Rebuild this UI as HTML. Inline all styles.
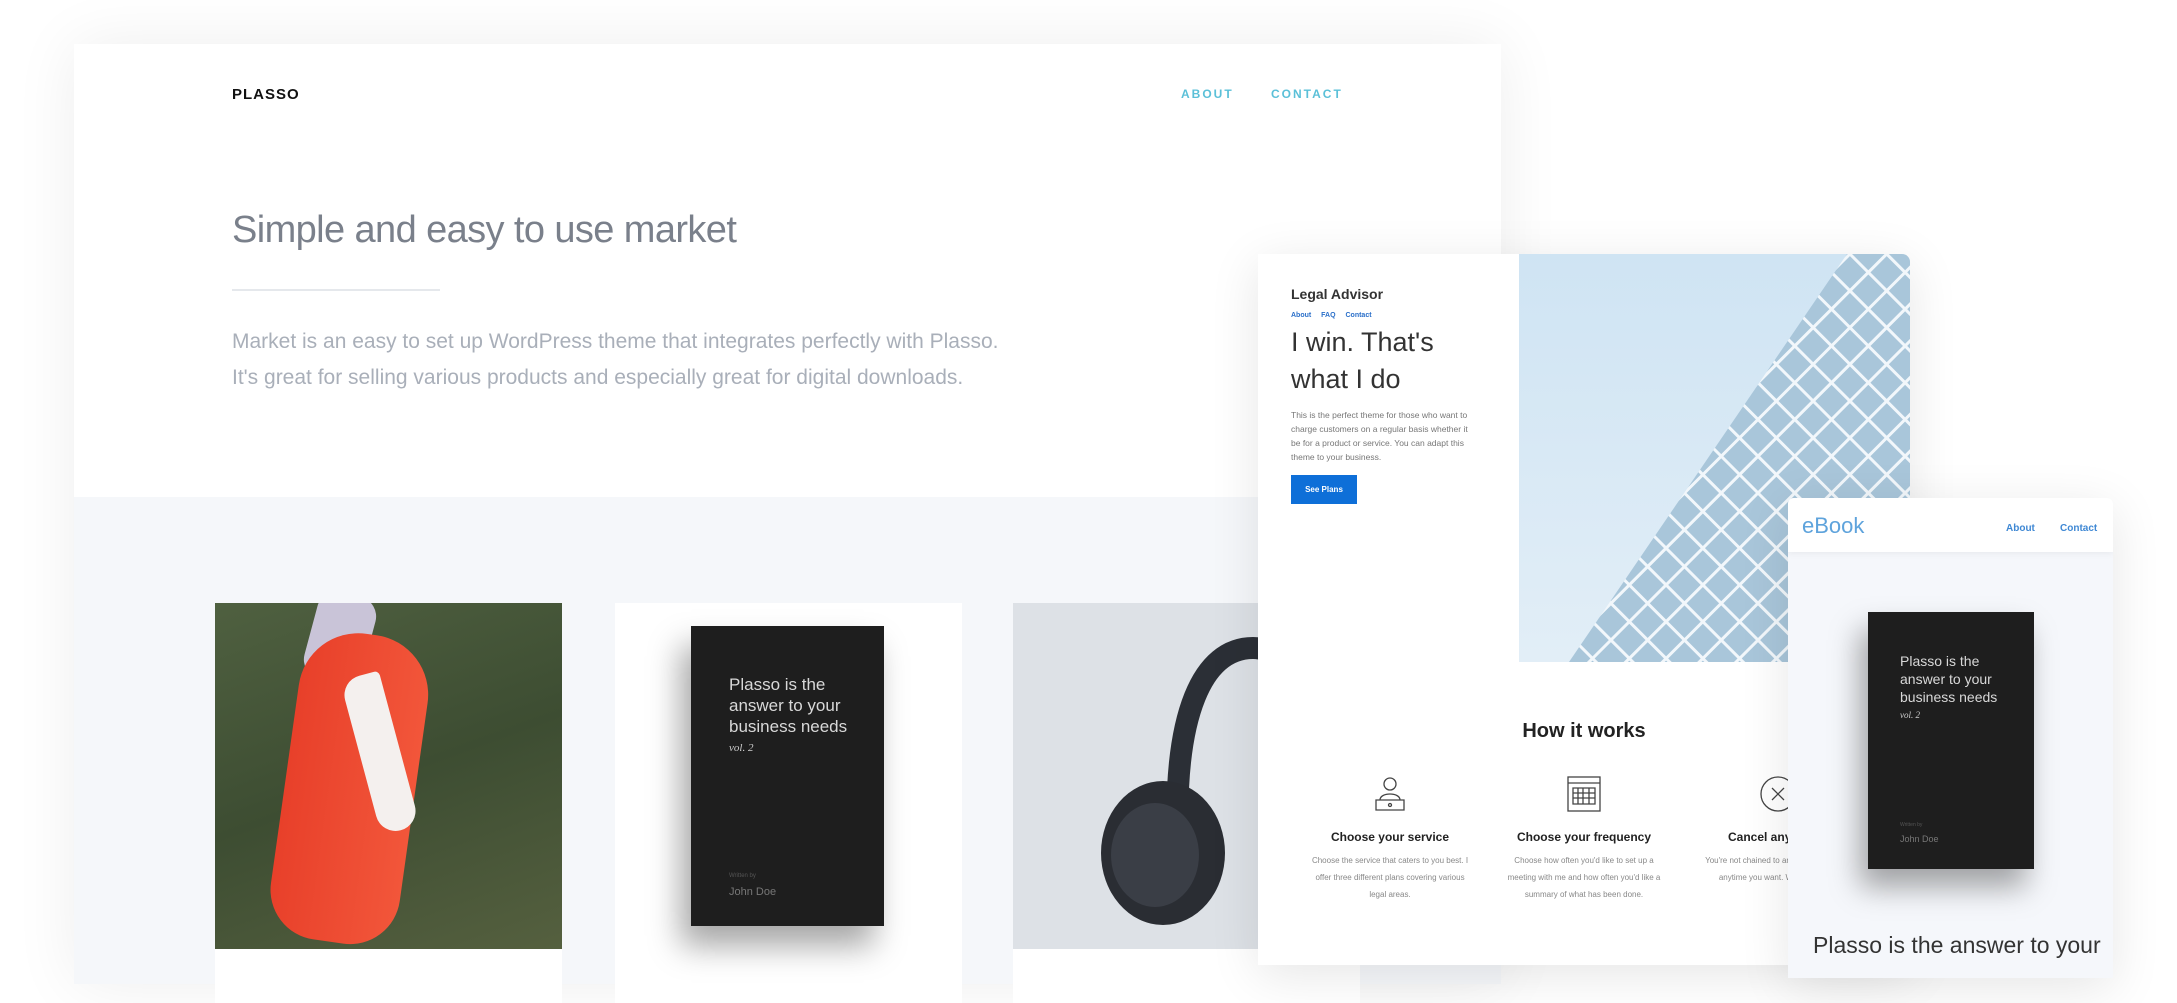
<!DOCTYPE html>
<html><head><meta charset="utf-8"><style>
*{margin:0;padding:0;box-sizing:border-box}
body{width:2177px;height:971px;overflow:hidden;background:#fff;font-family:"Liberation Sans",sans-serif;position:relative}
.abs{position:absolute}
#main{left:74px;top:44px;width:1427px;height:940px;background:#f5f7fa;box-shadow:0 0 60px rgba(0,0,0,.07)}
#hdr{left:0;top:0;width:1427px;height:453px;background:#fff}
.card{background:#fff}
</style></head><body>
<div id="main" class="abs">
 <div id="hdr" class="abs">
  <div class="abs" style="left:158px;top:42px;font-weight:bold;font-size:15px;letter-spacing:1px;color:#111">PLASSO</div>
  <div class="abs" style="left:1107px;top:43px;font-size:12px;letter-spacing:2px;color:#5bc0d8;font-weight:bold">ABOUT</div>
  <div class="abs" style="left:1197px;top:43px;font-size:12px;letter-spacing:2px;color:#5bc0d8;font-weight:bold">CONTACT</div>
  <div class="abs" style="left:158px;top:165px;font-size:38px;color:#7a808b;letter-spacing:-0.6px">Simple and easy to use market</div>
  <div class="abs" style="left:158px;top:245px;width:208px;height:2px;background:#e5e8ec"></div>
  <div class="abs" style="left:158px;top:280px;font-size:21px;line-height:36px;color:#a9afb9">Market is an easy to set up WordPress theme that integrates perfectly with Plasso.<br>It's great for selling various products and especially great for digital downloads.</div>
 </div>
 <div class="abs card" style="left:141px;top:559px;width:347px;height:400px">
  <div class="abs" style="left:0;top:0;width:347px;height:346px;background:linear-gradient(160deg,#4f6040,#3d4d32 50%,#55603f);overflow:hidden">
   <div class="abs" style="left:95px;top:-10px;width:60px;height:90px;background:#c9c4d8;border-radius:20px;transform:rotate(15deg)"></div>
   <div class="abs" style="left:70px;top:30px;width:130px;height:310px;background:linear-gradient(90deg,#e8402a,#f2563a);border-radius:60px 60px 50px 50px;transform:rotate(8deg)"></div>
   <div class="abs" style="left:145px;top:70px;width:40px;height:160px;background:#f4f0ee;border-radius:40px 10px 40px 40px;transform:rotate(-15deg)"></div>
  </div>
 </div>
 <div class="abs card" style="left:541px;top:559px;width:347px;height:400px">
  <div class="abs" style="left:76px;top:23px;width:193px;height:300px;background:#1e1e1e;box-shadow:-10px 20px 30px rgba(0,0,0,.35)">
   <div class="abs" style="left:38px;top:48px;font-size:17px;line-height:21px;color:#d8d8d8;width:130px">Plasso is the answer to your business needs</div>
   <div class="abs" style="left:38px;top:116px;font-size:11px;font-style:italic;font-family:'Liberation Serif',serif;color:#ccc">vol. 2</div>
   <div class="abs" style="left:38px;top:247px;font-size:6px;color:#555">Written by</div>
   <div class="abs" style="left:38px;top:260px;font-size:11px;color:#777">John Doe</div>
  </div>
 </div>
 <div class="abs card" style="left:939px;top:559px;width:347px;height:400px">
  <div class="abs" style="left:0;top:0;width:347px;height:346px;background:#dde1e6;overflow:hidden">
   <svg width="347" height="346" class="abs" style="left:0;top:0"><path d="M165 240 C160 110 190 45 240 45 C285 45 290 120 275 190" fill="none" stroke="#2b2f36" stroke-width="22" stroke-linecap="round"/><ellipse cx="150" cy="250" rx="62" ry="72" fill="#2a2d33"/><ellipse cx="142" cy="252" rx="44" ry="52" fill="#3a3e46"/></svg>
  </div>
 </div>
</div>
<div class="abs" style="left:1258px;top:254px;width:652px;height:711px;background:#fff;box-shadow:0 10px 50px rgba(0,0,0,.1);border-radius:0 8px 0 0">
 <div class="abs" style="left:261px;top:0;width:391px;height:408px;background:linear-gradient(180deg,#cfe4f3,#e2eef7);border-radius:0 8px 0 0;overflow:hidden">
  <svg width="391" height="408"><defs><pattern id="g" width="26" height="26" patternUnits="userSpaceOnUse" patternTransform="rotate(45)"><rect width="26" height="26" fill="#a9c6da" stroke="#f2f7fb" stroke-width="3"/></pattern></defs><polygon points="50,408 328,0 391,0 391,408" fill="url(#g)"/></svg>
 </div>
 <div class="abs" style="left:33px;top:32px;font-size:14px;font-weight:bold;color:#333">Legal Advisor</div>
 <div class="abs" style="left:33px;top:58px;font-size:7px;color:#2a6fc9;font-weight:bold;word-spacing:8px">About FAQ Contact</div>
 <div class="abs" style="left:33px;top:70px;font-size:27px;line-height:37px;color:#333">I win. That's<br>what I do</div>
 <div class="abs" style="left:33px;top:154px;font-size:8.5px;line-height:14px;color:#777;width:185px">This is the perfect theme for those who want to charge customers on a regular basis whether it be for a product or service. You can adapt this theme to your business.</div>
 <div class="abs" style="left:33px;top:221px;width:66px;height:29px;background:#0e6fd8;color:#fff;font-size:8px;font-weight:bold;text-align:center;line-height:29px">See Plans</div>
 <div class="abs" style="left:260px;top:466px;width:132px;text-align:center;font-size:20px;font-weight:bold;color:#222">How it works</div>
 <svg class="abs" style="left:112px;top:520px" width="40" height="40"><g fill="none" stroke="#444" stroke-width="1.3"><circle cx="20" cy="10" r="6"/><path d="M10 26 C10 18 30 18 30 26 M6 26h28v10H6z"/><circle cx="20" cy="31" r="1.5"/></g></svg>
 <svg class="abs" style="left:306px;top:520px" width="40" height="40"><g fill="none" stroke="#444" stroke-width="1.3"><rect x="4" y="3" width="32" height="34"/><path d="M4 9h32M9 14h22v16H9zM9 19h22M9 24h22M14 14v16M19 14v16M25 14v16"/></g></svg>
 <svg class="abs" style="left:500px;top:520px" width="40" height="40"><g fill="none" stroke="#444" stroke-width="1.3"><circle cx="20" cy="20" r="17"/><path d="M14 14l12 12M26 14l-12 12"/></g></svg>
 <div class="abs" style="left:42px;top:576px;width:180px;text-align:center;font-size:12px;font-weight:bold;color:#222">Choose your service</div>
 <div class="abs" style="left:236px;top:576px;width:180px;text-align:center;font-size:12px;font-weight:bold;color:#222">Choose your frequency</div>
 <div class="abs" style="left:470px;top:576px;width:180px;font-size:12px;font-weight:bold;color:#222">Cancel anytime</div>
 <div class="abs" style="left:52px;top:598px;width:160px;text-align:center;font-size:8px;line-height:17px;color:#888">Choose the service that caters to you best. I offer three different plans covering various legal areas.</div>
 <div class="abs" style="left:246px;top:598px;width:160px;text-align:center;font-size:8px;line-height:17px;color:#888">Choose how often you'd like to set up a meeting with me and how often you'd like a summary of what has been done.</div>
 <div class="abs" style="left:442px;top:598px;width:170px;text-align:right;font-size:8px;line-height:17px;color:#888">You're not chained to anything, you can cancel anytime you want. Where will you get such great service though?</div>
</div>
<div class="abs" style="left:1788px;top:498px;width:325px;height:480px;background:#f5f7fb;box-shadow:0 10px 50px rgba(0,0,0,.1);border-radius:6px 6px 0 0;overflow:hidden">
 <div class="abs" style="left:0;top:0;width:325px;height:54px;background:#fff;box-shadow:0 2px 6px rgba(0,0,0,.05)">
  <div class="abs" style="left:14px;top:15px;font-size:22px;color:#5ea3dc">eBook</div>
  <div class="abs" style="left:218px;top:25px;font-size:10px;color:#3f88d4;font-weight:bold">About</div>
  <div class="abs" style="left:272px;top:25px;font-size:10px;color:#3f88d4;font-weight:bold">Contact</div>
 </div>
 <div class="abs" style="left:80px;top:114px;width:166px;height:257px;background:#1e1e1e;box-shadow:-8px 18px 28px rgba(0,0,0,.35)">
  <div class="abs" style="left:32px;top:40px;font-size:14px;line-height:18px;color:#d8d8d8;width:108px">Plasso is the answer to your business needs</div>
  <div class="abs" style="left:32px;top:98px;font-size:9px;font-style:italic;font-family:'Liberation Serif',serif;color:#ccc">vol. 2</div>
  <div class="abs" style="left:32px;top:210px;font-size:5px;color:#555">Written by</div>
  <div class="abs" style="left:32px;top:222px;font-size:9px;color:#777">John Doe</div>
 </div>
 <div class="abs" style="left:25px;top:434px;font-size:23px;color:#333">Plasso is the answer to your</div>
</div>
</body></html>
